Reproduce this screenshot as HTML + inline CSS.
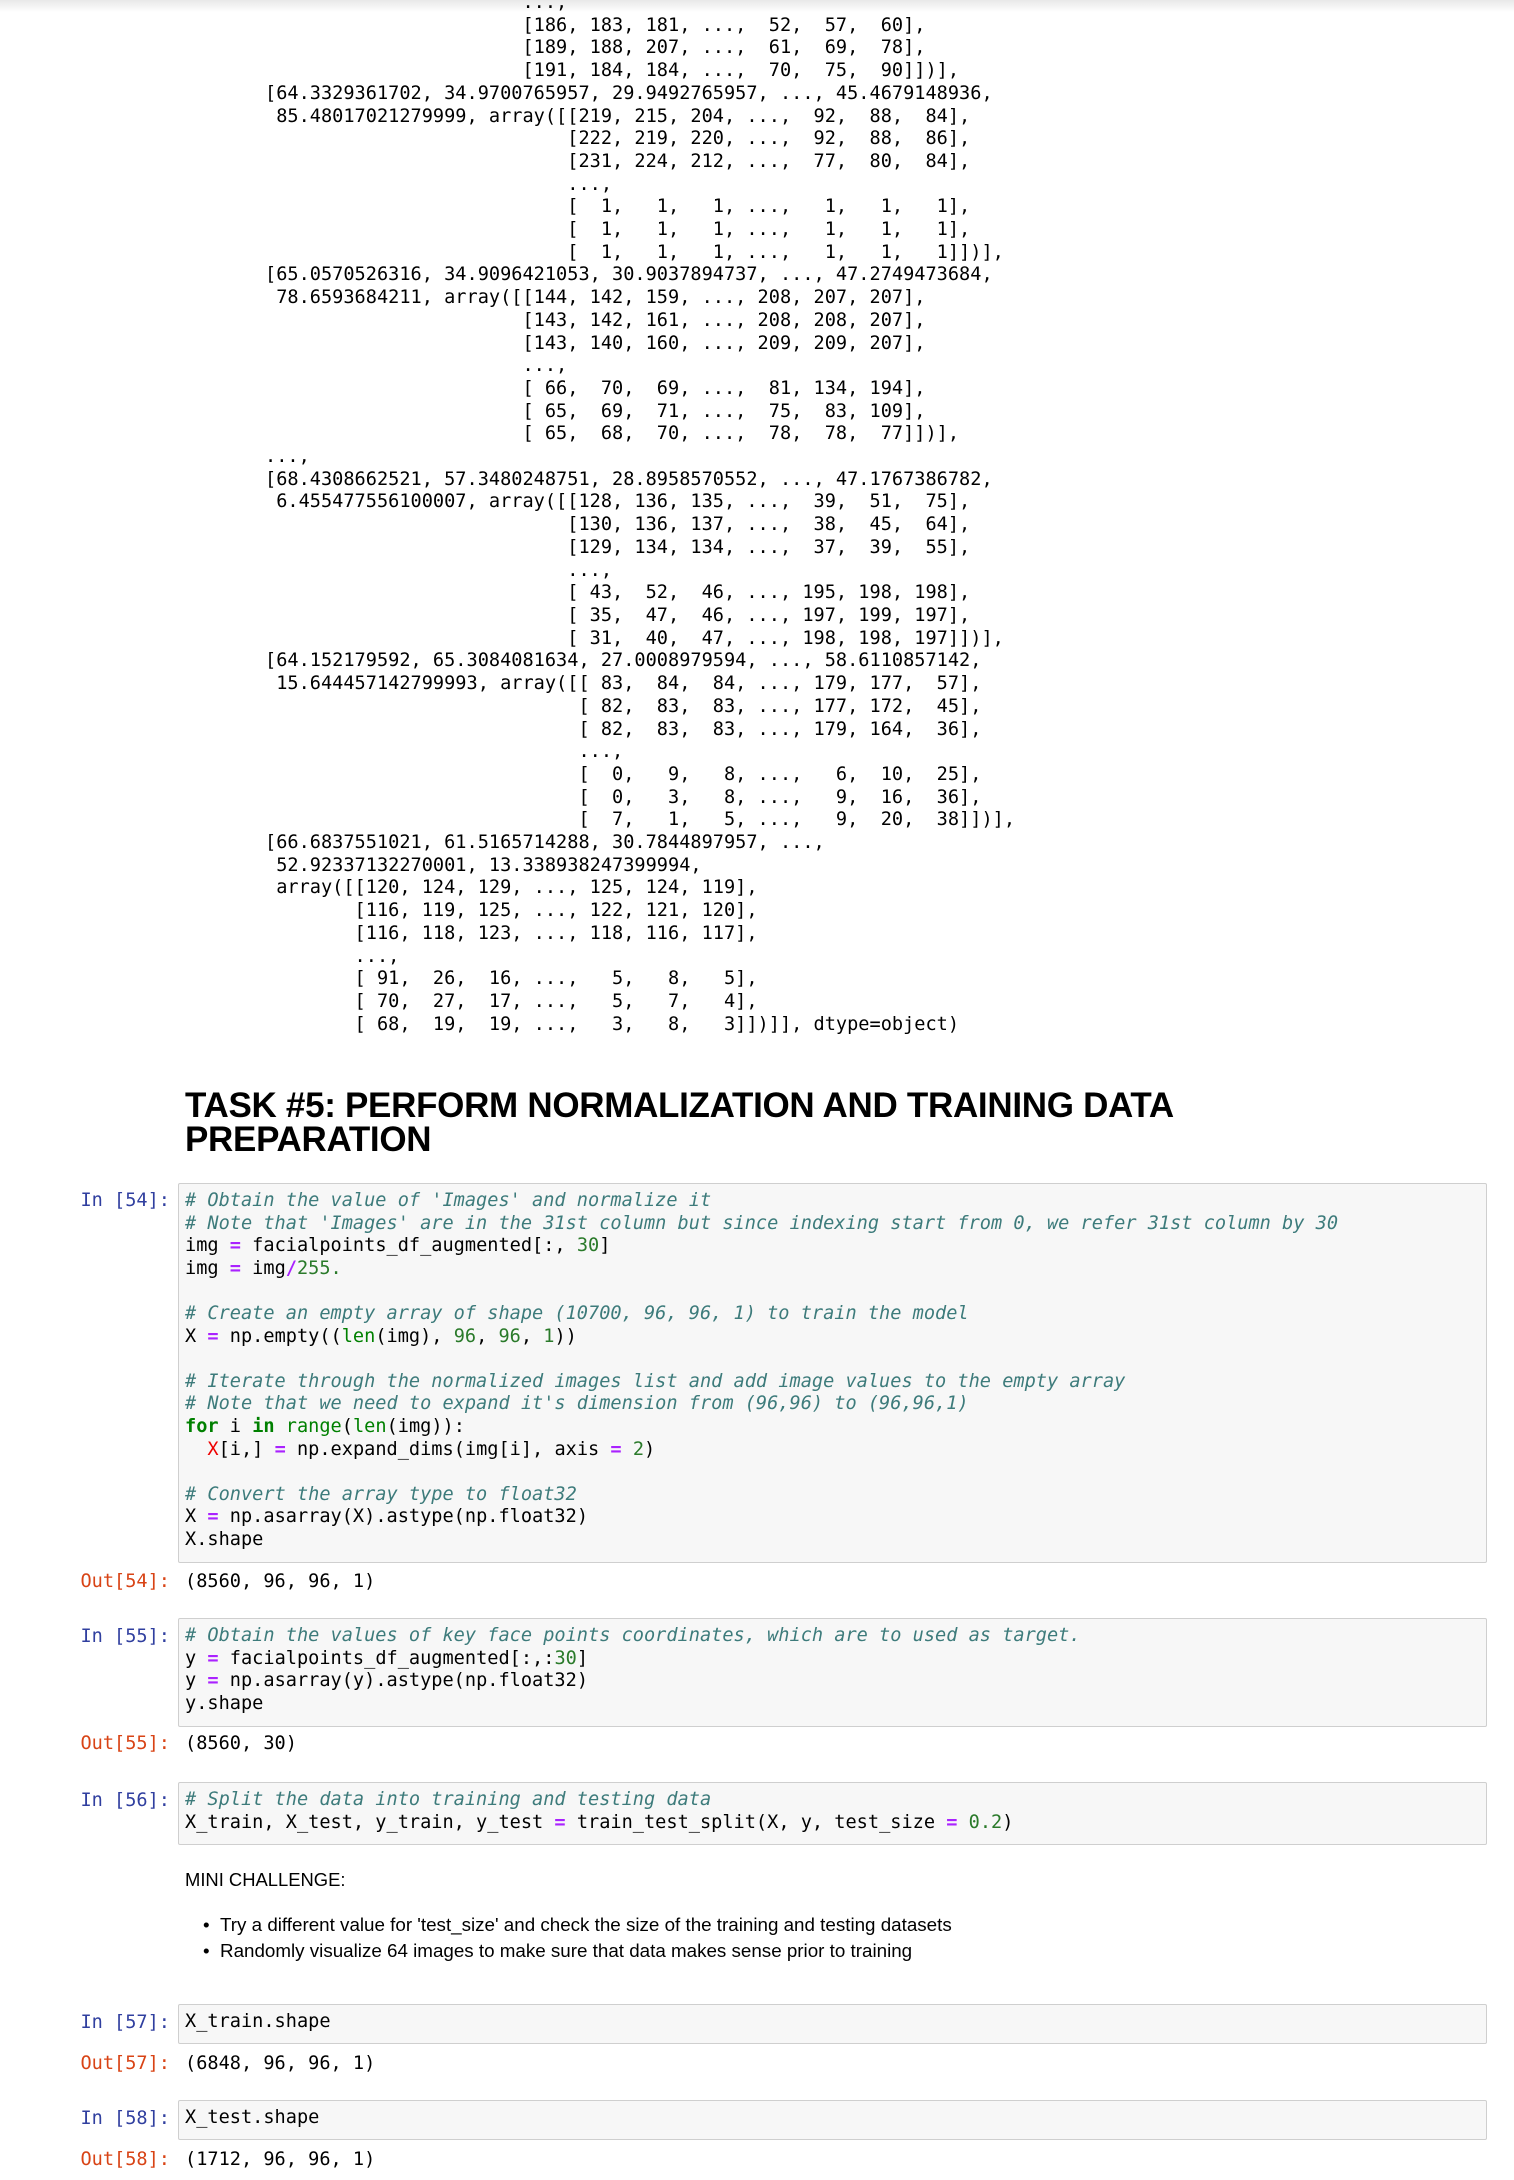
<!DOCTYPE html>
<html><head><meta charset="utf-8"><style>
html,body{margin:0;padding:0;background:#fff;width:1514px;height:2180px;overflow:hidden;position:relative}
.topbar{position:absolute;left:0;top:0;width:1514px;height:12px;background:linear-gradient(#e8e8e8,#fff)}
pre{margin:0;font-family:"DejaVu Sans Mono","Liberation Mono",monospace;font-size:18.6px;line-height:22.6px;color:#000;white-space:pre}
.abs{position:absolute}
.lbl{position:absolute;left:0;width:170px;text-align:right;font-family:"DejaVu Sans Mono","Liberation Mono",monospace;font-size:18.6px;line-height:22.6px;white-space:pre}
.in{color:#303F9F}.out{color:#D84315}
.box{position:absolute;left:178px;width:1307px;background:#f7f7f7;border:1px solid #cfcfcf;border-radius:2px}
.box pre{padding:6px 0 0 6px}
.c{color:#3d7b7b;font-style:italic}.o{color:#aa22ff;font-weight:bold}.n{color:#2a7a2a}.k{color:#008000;font-weight:bold}.b{color:#008000}.r{color:#e00}
h1{position:absolute;left:185px;top:1089px;margin:0;font-family:"Liberation Sans",Arial,sans-serif;font-weight:bold;font-size:35px;line-height:34px;letter-spacing:-0.3px;color:#000}
.txt{font-family:"Liberation Sans",Arial,sans-serif;font-size:18.4px;color:#000;position:absolute}
.bl{font-size:18.8px}
</style></head><body>
<div class="topbar"></div>
<pre class="abs" style="left:265px;top:-8px;line-height:22.7px">                       ...,
                       [186, 183, 181, ...,  52,  57,  60],
                       [189, 188, 207, ...,  61,  69,  78],
                       [191, 184, 184, ...,  70,  75,  90]])],
[64.3329361702, 34.9700765957, 29.9492765957, ..., 45.4679148936,
 85.48017021279999, array([[219, 215, 204, ...,  92,  88,  84],
                           [222, 219, 220, ...,  92,  88,  86],
                           [231, 224, 212, ...,  77,  80,  84],
                           ...,
                           [  1,   1,   1, ...,   1,   1,   1],
                           [  1,   1,   1, ...,   1,   1,   1],
                           [  1,   1,   1, ...,   1,   1,   1]])],
[65.0570526316, 34.9096421053, 30.9037894737, ..., 47.2749473684,
 78.6593684211, array([[144, 142, 159, ..., 208, 207, 207],
                       [143, 142, 161, ..., 208, 208, 207],
                       [143, 140, 160, ..., 209, 209, 207],
                       ...,
                       [ 66,  70,  69, ...,  81, 134, 194],
                       [ 65,  69,  71, ...,  75,  83, 109],
                       [ 65,  68,  70, ...,  78,  78,  77]])],
...,
[68.4308662521, 57.3480248751, 28.8958570552, ..., 47.1767386782,
 6.455477556100007, array([[128, 136, 135, ...,  39,  51,  75],
                           [130, 136, 137, ...,  38,  45,  64],
                           [129, 134, 134, ...,  37,  39,  55],
                           ...,
                           [ 43,  52,  46, ..., 195, 198, 198],
                           [ 35,  47,  46, ..., 197, 199, 197],
                           [ 31,  40,  47, ..., 198, 198, 197]])],
[64.152179592, 65.3084081634, 27.0008979594, ..., 58.6110857142,
 15.644457142799993, array([[ 83,  84,  84, ..., 179, 177,  57],
                            [ 82,  83,  83, ..., 177, 172,  45],
                            [ 82,  83,  83, ..., 179, 164,  36],
                            ...,
                            [  0,   9,   8, ...,   6,  10,  25],
                            [  0,   3,   8, ...,   9,  16,  36],
                            [  7,   1,   5, ...,   9,  20,  38]])],
[66.6837551021, 61.5165714288, 30.7844897957, ...,
 52.92337132270001, 13.338938247399994,
 array([[120, 124, 129, ..., 125, 124, 119],
        [116, 119, 125, ..., 122, 121, 120],
        [116, 118, 123, ..., 118, 116, 117],
        ...,
        [ 91,  26,  16, ...,   5,   8,   5],
        [ 70,  27,  17, ...,   5,   7,   4],
        [ 68,  19,  19, ...,   3,   8,   3]])]], dtype=object)</pre>

<h1>TASK #5: PERFORM NORMALIZATION AND TRAINING DATA<br>PREPARATION</h1>

<div class="lbl in" style="top:1190px">In [54]:</div>
<div class="box" style="top:1183px;height:378px"><pre><span class="c"># Obtain the value of 'Images' and normalize it</span>
<span class="c"># Note that 'Images' are in the 31st column but since indexing start from 0, we refer 31st column by 30</span>
img <span class="o">=</span> facialpoints_df_augmented[:, <span class="n">30</span>]
img <span class="o">=</span> img<span class="o">/</span><span class="n">255.</span>

<span class="c"># Create an empty array of shape (10700, 96, 96, 1) to train the model</span>
X <span class="o">=</span> np.empty((<span class="b">len</span>(img), <span class="n">96</span>, <span class="n">96</span>, <span class="n">1</span>))

<span class="c"># Iterate through the normalized images list and add image values to the empty array</span>
<span class="c"># Note that we need to expand it's dimension from (96,96) to (96,96,1)</span>
<span class="k">for</span> i <span class="k">in</span> <span class="b">range</span>(<span class="b">len</span>(img)):
  <span class="r">X</span>[i,] <span class="o">=</span> np.expand_dims(img[i], axis <span class="o">=</span> <span class="n">2</span>)

<span class="c"># Convert the array type to float32</span>
X <span class="o">=</span> np.asarray(X).astype(np.float32)
X.shape</pre></div>
<div class="lbl out" style="top:1571px">Out[54]:</div>
<pre class="abs" style="left:185px;top:1571px">(8560, 96, 96, 1)</pre>

<div class="lbl in" style="top:1626px">In [55]:</div>
<div class="box" style="top:1618px;height:107px"><pre><span class="c"># Obtain the values of key face points coordinates, which are to used as target.</span>
y <span class="o">=</span> facialpoints_df_augmented[:,:<span class="n">30</span>]
y <span class="o">=</span> np.asarray(y).astype(np.float32)
y.shape</pre></div>
<div class="lbl out" style="top:1733px">Out[55]:</div>
<pre class="abs" style="left:185px;top:1733px">(8560, 30)</pre>

<div class="lbl in" style="top:1790px">In [56]:</div>
<div class="box" style="top:1782px;height:61px"><pre><span class="c"># Split the data into training and testing data</span>
X_train, X_test, y_train, y_test <span class="o">=</span> train_test_split(X, y, test_size <span class="o">=</span> <span class="n">0.2</span>)</pre></div>

<div class="txt" style="left:185px;top:1869px">MINI CHALLENGE:</div>
<div class="txt bl" style="left:203px;top:1914px">•&nbsp;&nbsp;Try a different value for 'test_size' and check the size of the training and testing datasets</div>
<div class="txt bl" style="left:203px;top:1940px">•&nbsp;&nbsp;Randomly visualize 64 images to make sure that data makes sense prior to training</div>

<div class="lbl in" style="top:2012px">In [57]:</div>
<div class="box" style="top:2004px;height:38px"><pre>X_train.shape</pre></div>
<div class="lbl out" style="top:2053px">Out[57]:</div>
<pre class="abs" style="left:185px;top:2053px">(6848, 96, 96, 1)</pre>

<div class="lbl in" style="top:2108px">In [58]:</div>
<div class="box" style="top:2100px;height:38px"><pre>X_test.shape</pre></div>
<div class="lbl out" style="top:2149px">Out[58]:</div>
<pre class="abs" style="left:185px;top:2149px">(1712, 96, 96, 1)</pre>
</body></html>
